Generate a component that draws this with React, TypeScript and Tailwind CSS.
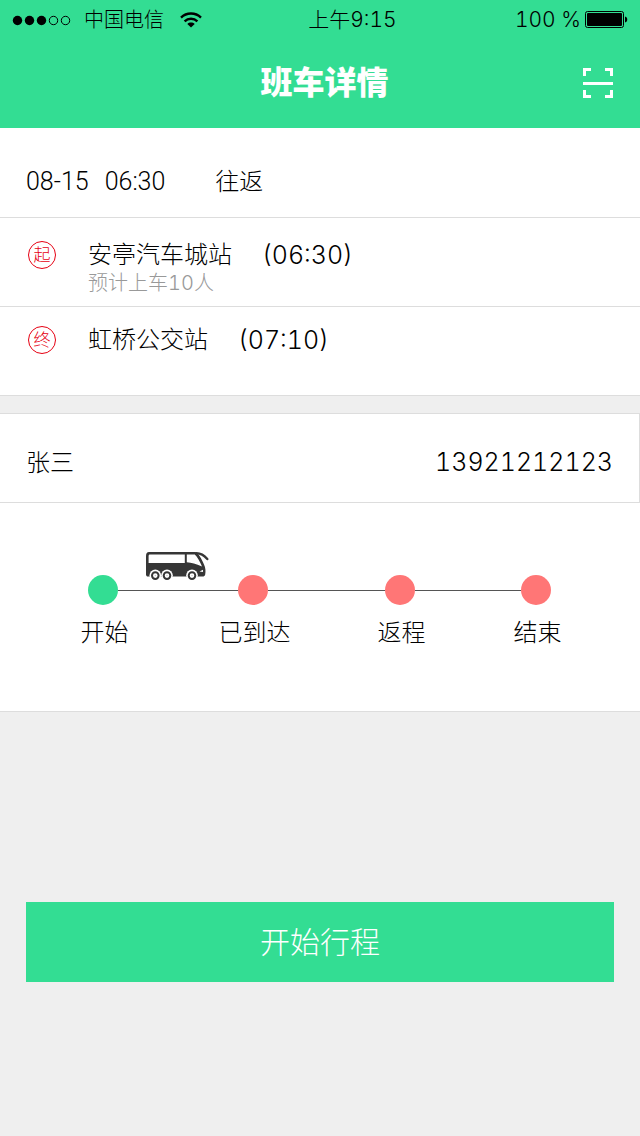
const cjk = "font-['Inter','Noto_Sans_CJK_SC',sans-serif] font-light";

type Stop = { mark: string; name: string; time: string; note?: string };

const stops: Stop[] = [
  { mark: "起", name: "安亭汽车城站", time: "(06:30)", note: "预计上车10人" },
  { mark: "终", name: "虹桥公交站", time: "(07:10)" },
];

const steps = [
  { label: "开始", grow: "flex-[150]", dot: "bg-[#33dd93]" },
  { label: "已到达", grow: "flex-[147]", dot: "bg-[#ff7676]" },
  { label: "返程", grow: "flex-[136]", dot: "bg-[#ff7676]" },
  { label: "结束", grow: "flex-none", dot: "bg-[#ff7676]" },
];

function SignalDots() {
  return (
    <svg width="60" height="12" viewBox="0 0 60 12" aria-hidden="true">
      <circle cx="5.5" cy="6.500" r="4.7" />
      <circle cx="17.5" cy="6.5" r="4.7" />
      <circle cx="29.5" cy="6.5" r="4.7" />
      <circle cx="41.5" cy="6.5" r="4.2" fill="none" stroke="#000" />
      <circle cx="53.5" cy="6.5" r="4.2" fill="none" stroke="#000" />
    </svg>
  );
}

function Wifi() {
  return (
    <svg width="22" height="16" viewBox="0 0 22 16" fill="none" stroke="#000" strokeWidth="2.4" aria-hidden="true">
      <path d="M1 5.6C6.6.2 15.4.2 21 5.6" />
      <path d="M4.6 9.3C8.2 5.9 13.8 5.9 17.4 9.3" />
      <path d="M11 15.6L7.3 12C9.3 10.1 12.7 10.1 14.7 12Z" fill="#000" stroke="none" />
    </svg>
  );
}

function Battery() {
  return (
    <svg width="43" height="17" viewBox="0 0 43 17" aria-hidden="true">
      <rect x="0.5" y="0.5" width="38" height="16" rx="2" fill="none" stroke="#000" />
      <rect x="2" y="2" width="35" height="13" rx="1" />
      <path d="M40 5.5c3 .5 3 5.5 0 6z" />
    </svg>
  );
}

function ScanIcon() {
  return (
    <svg width="30" height="30" viewBox="0 0 30 30" fill="none" stroke="#fff" strokeWidth="3" aria-hidden="true">
      <path d="M1.5 8V1.5H8M22 1.5h6.5V8M28.5 22v6.5H22M8 28.5H1.5V22M0 15.5h30" />
    </svg>
  );
}

function Bus() {
  return (
    <svg width="63" height="30" viewBox="0 0 63 30" aria-hidden="true">
      <path
        fill="#363636"
        fillRule="evenodd"
        d="M3 1H49.5C52.5 2.5 55.5 7.5 58 13.5C59.6 17 59.8 20 59.2 23.5C58.8 25 58 25.5 56.5 25.5H2C.8 25.5 0 24.6 0 23.4V5C0 2.5 1 1 3 1ZM4 3.4C3 3.4 2.6 4 2.6 5V12H38.8V3.4ZM40.8 3.4V11.2C45.5 11.4 50 12.8 56 15.5C54 10.5 51.5 6 48.8 3.4Z"
      />
      <path d="M50.5 2.3C55 2.3 57.5 3.6 61.3 8" fill="none" stroke="#363636" strokeWidth="2.4" strokeLinecap="round" />
      <path d="M53.5 20.5L57 18.8V21Z" fill="#fff" />
      {[9.3, 21, 46].map((x) => (
        <g key={x}>
          <circle cx={x} cy="24.3" r="5.8" fill="#fff" />
          <circle cx={x} cy="24.6" r="3.3" fill="#fff" stroke="#363636" strokeWidth="2" />
          <circle cx={x} cy="24.6" r="0.7" fill="#bbb" />
        </g>
      ))}
    </svg>
  );
}

export default function App() {
  return (
    <div className={`${cjk} min-h-screen bg-[#efefef] pb-10 text-2xl text-black`}>
      <header className="h-32 bg-[#33dd93]">
        <div className="flex h-10 items-center justify-between px-3 text-xl">
          <div className="flex items-center">
            <SignalDots />
            <span className="mr-4 ml-3">中国电信</span>
            <Wifi />
          </div>
          <span className="pr-3 text-[21px] tabular-nums">上午9:15</span>
          <div className="flex items-center gap-1">
            <span className="text-[21px] tabular-nums">100 %</span>
            <Battery />
          </div>
        </div>
        <div className="grid h-[86px] grid-cols-[1fr_auto_1fr] items-center pr-[27px] pl-9">
          <h1 className="col-start-2 text-[32px] font-black text-white">班车详情</h1>
          <button type="button" aria-label="扫一扫" className="justify-self-end">
            <ScanIcon />
          </button>
        </div>
      </header>

      <main>
        <section className="border-b border-[#dddddd] bg-white">
          <div className="flex h-[90px] items-center border-b border-[#dddddd] px-[26px] pt-[18px]">
            <span className="mr-4 font-['Roboto',sans-serif] text-[25px]">08-15</span>
            <span className="mr-[50px] font-['Roboto',sans-serif] text-[25px]">06:30</span>
            <span>往返</span>
          </div>
          {stops.map((s, i) => (
            <div
              key={s.name}
              className={
                i === 0
                  ? "flex h-[89px] items-start border-b border-[#dddddd] px-7 pt-[23px]"
                  : "flex h-[88px] items-start px-7 pt-[19px]"
              }
            >
              <span className="mr-8 flex size-7 shrink-0 items-center justify-center rounded-full border border-[#e60012] pt-px text-[17px] text-[#e60012]">
                {s.mark}
              </span>
              <div>
                <p className="flex gap-[30px] leading-7">
                  <span>{s.name}</span>
                  <span className="text-[25px] tabular-nums">{s.time}</span>
                </p>
                {s.note && <p className="text-xl leading-7 text-[#999999] tabular-nums">{s.note}</p>}
              </div>
            </div>
          ))}
        </section>

        <section className="mt-[17px] border-y border-[#dddddd] bg-white">
          <div className="flex h-[88px] items-center justify-between border-r border-[#dddddd] px-[26px] pt-2.5">
            <span>张三</span>
            <a href="tel:13921212123" className="text-[25px] tabular-nums">
              13921212123
            </a>
          </div>
        </section>

        <section className="border-b border-[#dddddd] bg-white pt-[72px] pr-[89px] pb-[62px] pl-[88px]">
          <ol className="flex">
            {steps.map((s, i) => (
              <li key={s.label} className={`flex ${s.grow}`}>
                <div className="flex w-[30px] flex-col items-center">
                  <span className={`size-[30px] rounded-full ${s.dot}`} />
                  <span className="mt-3 pl-[3px] whitespace-nowrap">{s.label}</span>
                </div>
                {i < steps.length - 1 && (
                  <div className="relative mt-[15px] h-px flex-1 bg-[#555555]">
                    {i === 0 && (
                      <span className="absolute bottom-2.5 left-7">
                        <Bus />
                      </span>
                    )}
                  </div>
                )}
              </li>
            ))}
          </ol>
        </section>

        <div className="mt-[190px] px-[26px]">
          <button type="button" className="h-20 w-full bg-[#33dd93] text-3xl text-white">
            开始行程
          </button>
        </div>
      </main>
    </div>
  );
}
